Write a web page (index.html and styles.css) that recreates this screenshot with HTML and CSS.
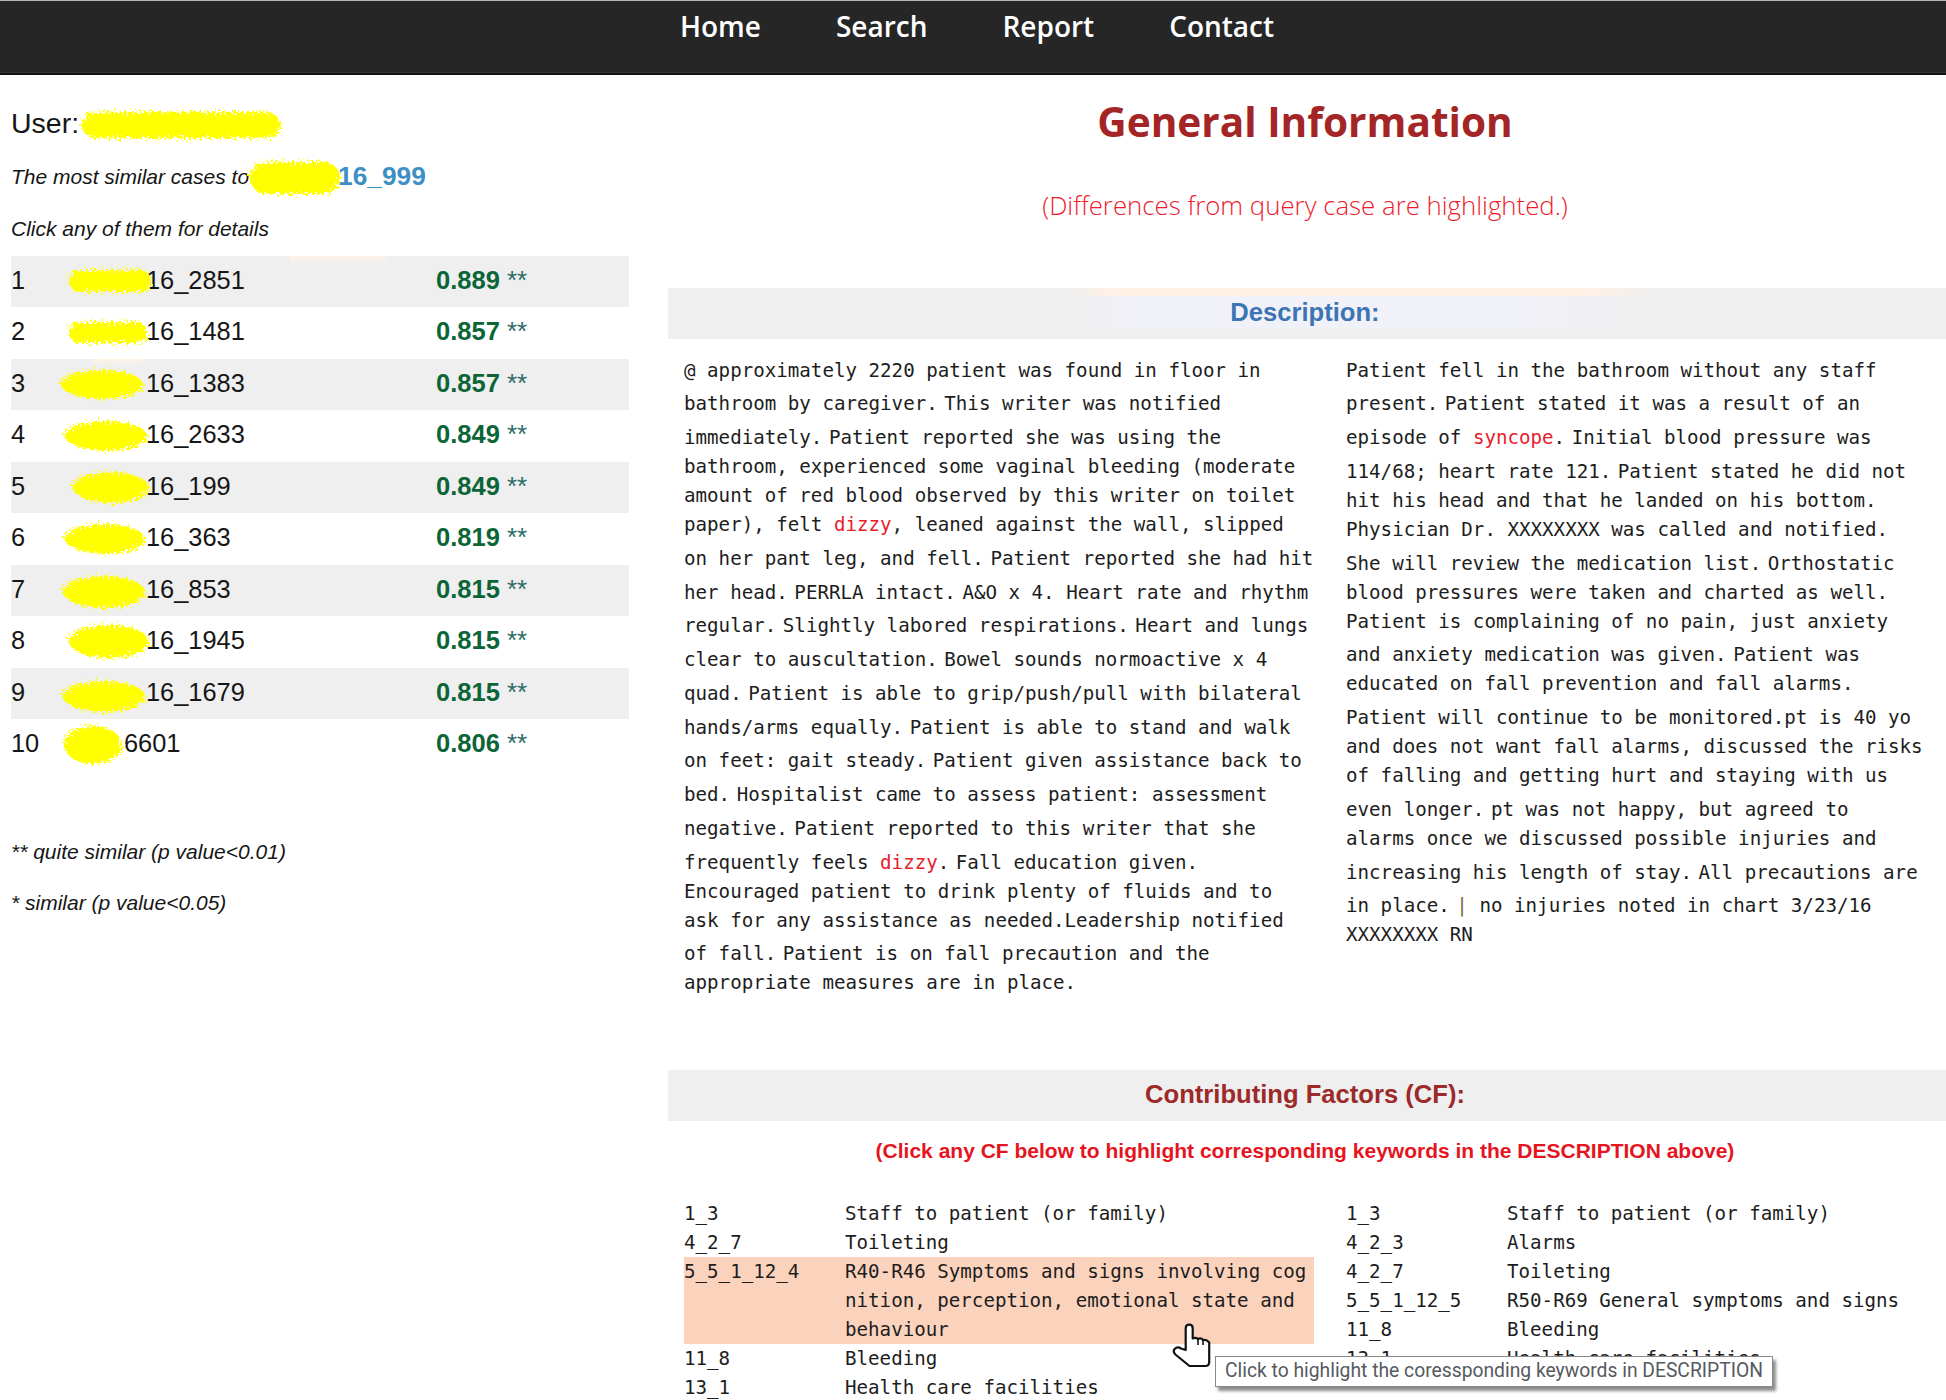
FILE: index.html
```html
<!DOCTYPE html>
<html lang="en">
<head>
<meta charset="utf-8">
<title>General Information</title>
<link rel="stylesheet" href="styles.css">
</head>
<body>
<svg class="defs" width="0" height="0" aria-hidden="true">
  <filter id="rough" x="-15%" y="-30%" width="130%" height="160%">
    <feTurbulence type="fractalNoise" baseFrequency="0.4" numOctaves="3" seed="4" result="n"/>
    <feDisplacementMap in="SourceGraphic" in2="n" scale="13"/>
  </filter>
</svg>
<nav class="nav">
  <a>Home</a><a>Search</a><a>Report</a><a>Contact</a>
</nav>
<main class="main">
  <aside class="side">
    <div class="user">User:<span class="blot b-user"></span></div>
    <div class="intro"><i>The most similar cases to</i><span class="blot b-case"></span><b class="case">16_999</b></div>
    <div class="hint">Click any of them for details</div>
    <ol class="cases">
      <li class="case-row tint-a"><span>1</span><span>16_2851</span><span><b>0.889</b> <em>**</em></span><span class="blot b1"></span></li>
      <li class="case-row"><span>2</span><span>16_1481</span><span><b>0.857</b> <em>**</em></span><span class="blot b2"></span></li>
      <li class="case-row tint-b"><span>3</span><span>16_1383</span><span><b>0.857</b> <em>**</em></span><span class="blot b3"></span></li>
      <li class="case-row"><span>4</span><span>16_2633</span><span><b>0.849</b> <em>**</em></span><span class="blot b4"></span></li>
      <li class="case-row"><span>5</span><span>16_199</span><span><b>0.849</b> <em>**</em></span><span class="blot b5"></span></li>
      <li class="case-row"><span>6</span><span>16_363</span><span><b>0.819</b> <em>**</em></span><span class="blot b6"></span></li>
      <li class="case-row"><span>7</span><span>16_853</span><span><b>0.815</b> <em>**</em></span><span class="blot b7"></span></li>
      <li class="case-row"><span>8</span><span>16_1945</span><span><b>0.815</b> <em>**</em></span><span class="blot b8"></span></li>
      <li class="case-row"><span>9</span><span>16_1679</span><span><b>0.815</b> <em>**</em></span><span class="blot b9"></span></li>
      <li class="case-row"><span>10</span><span class="short">6601</span><span><b>0.806</b> <em>**</em></span><span class="blot b10"></span></li>
    </ol>
    <p class="note first">** quite similar (p value&lt;0.01)</p>
    <p class="note">* similar (p value&lt;0.05)</p>
  </aside>
  <section class="content">
    <h1 class="title">General Information</h1>
    <p class="sub">(Differences from query case are highlighted.)</p>
    <h2 class="bar bar-desc">Description:</h2>
    <div class="desc">
      <div class="col">
        <span class="ln">@ approximately 2220 patient was found in floor in</span>
        <span class="ln g">bathroom by caregiver.<span class="sp"> </span>This writer was notified</span>
        <span class="ln g">immediately.<span class="sp"> </span>Patient reported she was using the</span>
        <span class="ln">bathroom, experienced some vaginal bleeding (moderate</span>
        <span class="ln">amount of red blood observed by this writer on toilet</span>
        <span class="ln">paper), felt <mark>dizzy</mark>, leaned against the wall, slipped</span>
        <span class="ln g">on her pant leg, and fell.<span class="sp"> </span>Patient reported she had hit</span>
        <span class="ln g">her head.<span class="sp"> </span>PERRLA intact.<span class="sp"> </span>A&amp;O x 4. Heart rate and rhythm</span>
        <span class="ln g">regular.<span class="sp"> </span>Slightly labored respirations.<span class="sp"> </span>Heart and lungs</span>
        <span class="ln g">clear to auscultation.<span class="sp"> </span>Bowel sounds normoactive x 4</span>
        <span class="ln g">quad.<span class="sp"> </span>Patient is able to grip/push/pull with bilateral</span>
        <span class="ln g">hands/arms equally.<span class="sp"> </span>Patient is able to stand and walk</span>
        <span class="ln g">on feet: gait steady.<span class="sp"> </span>Patient given assistance back to</span>
        <span class="ln g">bed.<span class="sp"> </span>Hospitalist came to assess patient: assessment</span>
        <span class="ln g">negative.<span class="sp"> </span>Patient reported to this writer that she</span>
        <span class="ln g">frequently feels <mark>dizzy</mark>.<span class="sp"> </span>Fall education given.</span>
        <span class="ln">Encouraged patient to drink plenty of fluids and to</span>
        <span class="ln">ask for any assistance as needed.Leadership notified</span>
        <span class="ln g">of fall.<span class="sp"> </span>Patient is on fall precaution and the</span>
        <span class="ln">appropriate measures are in place.</span>
      </div>
      <div class="col">
        <span class="ln">Patient fell in the bathroom without any staff</span>
        <span class="ln g">present.<span class="sp"> </span>Patient stated it was a result of an</span>
        <span class="ln g">episode of <mark>syncope</mark>.<span class="sp"> </span>Initial blood pressure was</span>
        <span class="ln g">114/68; heart rate 121.<span class="sp"> </span>Patient stated he did not</span>
        <span class="ln">hit his head and that he landed on his bottom.</span>
        <span class="ln">Physician Dr. XXXXXXXX was called and notified.</span>
        <span class="ln g">She will review the medication list.<span class="sp"> </span>Orthostatic</span>
        <span class="ln">blood pressures were taken and charted as well.</span>
        <span class="ln">Patient is complaining of no pain, just anxiety</span>
        <span class="ln g">and anxiety medication was given.<span class="sp"> </span>Patient was</span>
        <span class="ln">educated on fall prevention and fall alarms.</span>
        <span class="ln g">Patient will continue to be monitored.pt is 40 yo</span>
        <span class="ln">and does not want fall alarms, discussed the risks</span>
        <span class="ln">of falling and getting hurt and staying with us</span>
        <span class="ln g">even longer.<span class="sp"> </span>pt was not happy, but agreed to</span>
        <span class="ln">alarms once we discussed possible injuries and</span>
        <span class="ln g">increasing his length of stay.<span class="sp"> </span>All precautions are</span>
        <span class="ln g">in place.<span class="sp"> </span><span class="pipe">|</span> no injuries noted in chart 3/23/16</span>
        <span class="ln">XXXXXXXX RN</span>
      </div>
    </div>
    <h2 class="bar bar-cf">Contributing Factors (CF):</h2>
    <p class="instr">(Click any CF below to highlight corresponding keywords in the DESCRIPTION above)</p>
    <div class="cf">
      <div class="cf-col">
        <div class="cf-row"><span>1_3</span><span>Staff to patient (or family)</span></div>
        <div class="cf-row"><span>4_2_7</span><span>Toileting</span></div>
        <div class="cf-row on"><span>5_5_1_12_4</span><span>R40-R46 Symptoms and signs involving cognition, perception, emotional state and behaviour</span></div>
        <div class="cf-row"><span>11_8</span><span>Bleeding</span></div>
        <div class="cf-row"><span>13_1</span><span>Health care facilities</span></div>
      </div>
      <div class="cf-col">
        <div class="cf-row"><span>1_3</span><span>Staff to patient (or family)</span></div>
        <div class="cf-row"><span>4_2_3</span><span>Alarms</span></div>
        <div class="cf-row"><span>4_2_7</span><span>Toileting</span></div>
        <div class="cf-row"><span>5_5_1_12_5</span><span>R50-R69 General symptoms and signs</span></div>
        <div class="cf-row"><span>11_8</span><span>Bleeding</span></div>
        <div class="cf-row"><span>13_1</span><span>Health care facilities</span></div>
      </div>
    </div>
  </section>
</main>
<svg class="hand" viewBox="-1 -1 39 45" aria-hidden="true">
  <path d="M12.7 26V4.2Q12.7.7 16.2.7T19.7 4.2V14.5Q22.5 13 25 15Q28 13.5 30 16Q33.5 15 36.2 18.5V38Q36.2 42 32.5 42H16.5L2.4 30.5Q-.4 27.5 1.6 25Q4.5 22 8 24.5Z" fill="#fff" stroke="#111" stroke-width="2.2" stroke-linejoin="round"/>
  <path d="M25 15V21M30 16V21" fill="none" stroke="#111" stroke-width="1.6"/>
</svg>
<div class="tip">Click to highlight the coressponding keywords in DESCRIPTION</div>
</body>
</html>
```
FILE: styles.css
```css
html, body { margin: 0; padding: 0; }
body {
  position: relative;
  width: 1946px;
  height: 1400px;
  overflow: hidden;
  background: #fff;
  color: #161616;
  font-family: "Liberation Sans", Arial, sans-serif;
}
.defs { position: absolute; }

.nav {
  box-sizing: border-box;
  height: 75px;
  display: flex;
  justify-content: center;
  gap: 75px;
  padding: 5px 0 0 8px;
  background: #262626;
  border-top: 1px solid #b5b5b5;
  border-bottom: 2px solid #111;
  box-shadow: inset 0 -1px 0 #333;
  font: 600 28px/40px "Open Sans", sans-serif;
  color: #fff;
}

.main { display: flex; align-items: flex-start; }
.side { flex: 0 0 668px; box-sizing: border-box; padding-left: 11px; }
.content { flex: 1; min-width: 0; }

.user { position: relative; margin-top: 28px; font-size: 28.5px; line-height: 40px; }
.intro { position: relative; margin-top: 16px; height: 36px; font-size: 21px; line-height: 36px; }
.case { position: absolute; left: 327px; top: 0; font-size: 26.3px; color: #3d8fc4; font-weight: 700; line-height: 34px; }
.hint { margin-top: 16px; font-size: 21px; font-style: italic; line-height: 36px; }

.cases { list-style: none; margin: 9px 0 0; padding: 0; width: 618px; }
.case-row {
  position: relative;
  display: grid;
  grid-template-columns: 135px 290px 1fr;
  height: 51.44px;
  line-height: 49px;
  font-size: 25.4px;
}
.case-row:nth-child(odd) { background-color: #efefef; }
.case-row.tint-a { background-image: linear-gradient(#fff1e4, #f2f0f0); background-size: 97px 7px; background-position: 279px 0; background-repeat: no-repeat; }
.case-row.tint-b { background-image: linear-gradient(#fff1e4, #f2f0f0); background-size: 50px 6px; background-position: 82px 0; background-repeat: no-repeat; }
.case-row b { color: #0b6537; font-size: 25.5px; }
.case-row em { font-style: normal; color: #2c6b66; font-size: 26px; }
.short { margin-left: -22px; }

.blot { position: absolute; display: block; background: #ffff00; border-radius: 50%; filter: url(#rough); }
.b-user { left: 71px; top: 9px; width: 198px; height: 26px; border-radius: 14px; }
.b-case { left: 239px; top: 3px; width: 90px; height: 32px; border-radius: 16px; }
.b1  { left: 58px; top: 14px; width: 82px; height: 22px; border-radius: 11px; }
.b2  { left: 58px; top: 15px; width: 78px; height: 21px; border-radius: 10px; }
.b3  { left: 50px; top: 11px; width: 82px; height: 29px; }
.b4  { left: 54px; top: 11px; width: 82px; height: 30px; }
.b5  { left: 62px; top: 10px; width: 76px; height: 31px; }
.b6  { left: 54px; top: 11px; width: 80px; height: 30px; }
.b7  { left: 52px; top: 11px; width: 82px; height: 32px; }
.b8  { left: 58px; top: 9px;  width: 80px; height: 33px; }
.b9  { left: 52px; top: 13px; width: 82px; height: 31px; }
.b10 { left: 53px; top: 7px;  width: 58px; height: 38px; }

.note { margin: 15px 0 0; font-size: 21px; font-style: italic; line-height: 36px; }
.note.first { margin-top: 63.6px; }

.title {
  margin: 19px 0 0;
  text-align: center;
  font: 700 40.6px/56px "Open Sans", sans-serif;
  color: #a32525;
  padding-right: 4px;
}
.sub {
  margin: 35px 0 0;
  padding-right: 4px;
  text-align: center;
  font: 300 25.8px/40px "Open Sans", sans-serif;
  color: #ee1c2c;
}
.bar {
  box-sizing: border-box;
  margin: 0;
  height: 51px;
  padding-right: 4px;
  text-align: center;
  background-color: #efefef;
  font-size: 25.6px;
  line-height: 48px;
  font-weight: 700;
}
.bar-desc {
  margin-top: 63px;
  color: #3c74b4;
  background-image:
    linear-gradient(90deg, transparent, #fff0e3 7%, #fff0e3 90%, transparent),
    linear-gradient(90deg, transparent, #f1f2f9 12%, #f1f2f9 75%, transparent);
  background-size: 575px 8px, 575px 40px;
  background-position: 404px 0, 404px 0;
  background-repeat: no-repeat;
}
.bar-cf { margin-top: 0; color: #9c2a2a; }

.desc {
  display: grid;
  grid-template-columns: 630px 1fr;
  column-gap: 32px;
  height: 731px;
  box-sizing: border-box;
  padding: 16.5px 0 0 16px;
  font-family: "DejaVu Sans Mono", monospace;
  font-size: 19.17px;
  color: #1d1d1d;
}
.ln { display: block; height: 29px; line-height: 29px; white-space: nowrap; }
.ln.g { margin-top: 4.75px; }
.sp { letter-spacing: -5px; }
.col mark { background: none; color: #e8202c; }
.pipe { color: #7a6a3a; }

.instr {
  margin: 15px 0 0;
  padding-right: 4px;
  text-align: center;
  font-size: 21px;
  font-weight: 700;
  line-height: 30px;
  color: #e6141e;
}
.cf {
  display: grid;
  grid-template-columns: 630px 1fr;
  column-gap: 32px;
  padding: 33px 0 0 16px;
  font-family: "DejaVu Sans Mono", monospace;
  font-size: 19.17px;
  line-height: 29px;
  color: #1d1d1d;
}
.cf-row { display: grid; grid-template-columns: 161px 1fr; }
.cf-row span:last-child { word-break: break-all; }
.cf-row.on { background: #fbd3bd; }

.hand { position: absolute; left: 1172px; top: 1323px; width: 39px; height: 45px; }
.tip {
  position: absolute;
  left: 1215px;
  top: 1356px;
  box-sizing: border-box;
  width: 558px;
  height: 31px;
  border: 1px solid #8a8a8a;
  background: #fff;
  box-shadow: 3px 4px 3px rgba(0, 0, 0, .45);
  font: 400 19.3px/28px Roboto, sans-serif;
  color: #555a60;
  text-align: center;
  white-space: nowrap;
}
```
